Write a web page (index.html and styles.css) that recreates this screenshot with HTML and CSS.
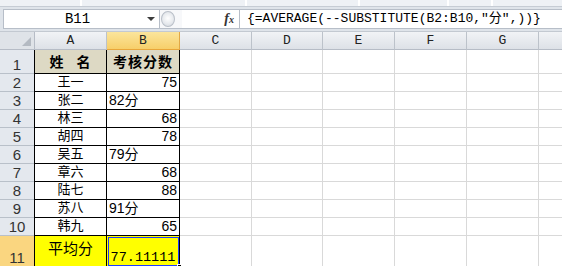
FILE: index.html
```html
<!DOCTYPE html>
<html lang="zh-CN">
<head>
    <meta charset="UTF-8">
    <title>平均分</title>
    <link rel="stylesheet" href="styles.css">
</head>
<body>
    <div class="ribbon">
        <span class="rb" style="width:82px"></span>
        <span class="rb" style="width:165px"></span>
        <span class="rb" style="width:113px"></span>
        <span class="rb" style="width:89px"></span>
        <span class="rb" style="width:44px"></span>
    </div>

    <div class="formula-bar">
        <div class="name-box">
            <span class="name">B11</span>
            <span class="arrow"></span>
        </div>
        <div class="grip"><span class="knob"></span></div>
        <div class="fx-area">
            <span class="fx"><i>f</i><i class="x">x</i></span>
        </div>
        <div class="formula">{=AVERAGE(--SUBSTITUTE(B2:B10,"分",))}</div>
    </div>

    <div class="sheet">
        <div class="corner"><span class="tri"></span></div>
        <div class="col-head">A</div>
        <div class="col-head active">B</div>
        <div class="col-head">C</div>
        <div class="col-head">D</div>
        <div class="col-head">E</div>
        <div class="col-head">F</div>
        <div class="col-head">G</div>
        <div class="col-head last"></div>

        <div class="row-head">1</div>
        <div class="cell t a title"><span class="spread">姓</span><span>名</span></div>
        <div class="cell t title">考核分数</div>
        <div class="cell"></div><div class="cell"></div><div class="cell"></div><div class="cell"></div><div class="cell"></div><div class="cell last"></div>

        <div class="row-head">2</div>
        <div class="cell t a name-cell">王一</div>
        <div class="cell t num">75</div>
        <div class="cell"></div><div class="cell"></div><div class="cell"></div><div class="cell"></div><div class="cell"></div><div class="cell last"></div>

        <div class="row-head">3</div>
        <div class="cell t a name-cell">张二</div>
        <div class="cell t txt">82分</div>
        <div class="cell"></div><div class="cell"></div><div class="cell"></div><div class="cell"></div><div class="cell"></div><div class="cell last"></div>

        <div class="row-head">4</div>
        <div class="cell t a name-cell">林三</div>
        <div class="cell t num">68</div>
        <div class="cell"></div><div class="cell"></div><div class="cell"></div><div class="cell"></div><div class="cell"></div><div class="cell last"></div>

        <div class="row-head">5</div>
        <div class="cell t a name-cell">胡四</div>
        <div class="cell t num">78</div>
        <div class="cell"></div><div class="cell"></div><div class="cell"></div><div class="cell"></div><div class="cell"></div><div class="cell last"></div>

        <div class="row-head">6</div>
        <div class="cell t a name-cell">吴五</div>
        <div class="cell t txt">79分</div>
        <div class="cell"></div><div class="cell"></div><div class="cell"></div><div class="cell"></div><div class="cell"></div><div class="cell last"></div>

        <div class="row-head">7</div>
        <div class="cell t a name-cell">章六</div>
        <div class="cell t num">68</div>
        <div class="cell"></div><div class="cell"></div><div class="cell"></div><div class="cell"></div><div class="cell"></div><div class="cell last"></div>

        <div class="row-head">8</div>
        <div class="cell t a name-cell">陆七</div>
        <div class="cell t num">88</div>
        <div class="cell"></div><div class="cell"></div><div class="cell"></div><div class="cell"></div><div class="cell"></div><div class="cell last"></div>

        <div class="row-head">9</div>
        <div class="cell t a name-cell">苏八</div>
        <div class="cell t txt">91分</div>
        <div class="cell"></div><div class="cell"></div><div class="cell"></div><div class="cell"></div><div class="cell"></div><div class="cell last"></div>

        <div class="row-head">10</div>
        <div class="cell t a name-cell">韩九</div>
        <div class="cell t num">65</div>
        <div class="cell"></div><div class="cell"></div><div class="cell"></div><div class="cell"></div><div class="cell"></div><div class="cell last"></div>

        <div class="row-head active">11</div>
        <div class="cell t a yellow avg-label">平均分</div>
        <div class="cell t yellow selected avg">77.11111<span class="handle"></span></div>
        <div class="cell"></div><div class="cell"></div><div class="cell"></div><div class="cell"></div><div class="cell"></div><div class="cell last"></div>
    </div>
</body>
</html>
```

FILE: styles.css
```css
body {
    margin: 0;
    width: 562px;
    height: 266px;
    overflow: hidden;
    background: #dfe4ea;
    font-family: 'Liberation Sans', 'Noto Sans CJK SC', sans-serif;
    color: #000;
}

/* ribbon remains at the very top */
.ribbon {
    display: flex;
    height: 6px;
    background: #eef1f5;
    border-bottom: 1px solid #c6ccd4;
}

.rb {
    height: 100%;
    border-right: 2px solid #fff;
    box-sizing: border-box;
}

/* formula bar */
.formula-bar {
    display: flex;
    height: 22px;
    padding: 2px 0 0 3px;
    border-bottom: 1px solid #c3c9d1;
}

.name-box {
    width: 157px;
    height: 20px;
    background: #fff;
    border: 1px solid #b7bec8;
    box-sizing: border-box;
    display: flex;
    align-items: center;
}

.name {
    flex: 1;
    text-align: center;
    font-family: 'Liberation Mono', 'Noto Sans CJK SC', monospace;
    font-size: 14px;
    padding-left: 4px;
}

.arrow {
    width: 0;
    height: 0;
    margin-right: 4px;
    border-left: 4px solid transparent;
    border-right: 4px solid transparent;
    border-top: 4px solid #3c3c3c;
}

.grip {
    width: 22px;
    height: 20px;
    display: flex;
    align-items: center;
    background: #f7f8fa;
    border-top: 1px solid #b7bec8;
    border-bottom: 1px solid #b7bec8;
    box-sizing: border-box;
}

.knob {
    width: 14px;
    height: 16px;
    margin-left: 1px;
    border-radius: 50%;
    border: 1px solid #b9bfc8;
    background: radial-gradient(circle at 50% 45%, #ffffff 0, #e7eaee 55%, #cfd4da 100%);
    box-sizing: border-box;
}

.fx-area {
    width: 58px;
    height: 20px;
    background: #fff;
    border-top: 1px solid #b7bec8;
    border-bottom: 1px solid #b7bec8;
    border-right: 1px solid #b7bec8;
    box-sizing: border-box;
    display: flex;
    align-items: center;
    justify-content: flex-end;
    padding-right: 5px;
}

.fx {
    font-family: 'Liberation Serif', serif;
    font-size: 14px;
    color: #333;
    font-weight: bold;
}

.fx .x {
    font-size: 10px;
}

.formula {
    flex: 1;
    height: 20px;
    background: #fff;
    border-top: 1px solid #b7bec8;
    border-bottom: 1px solid #b7bec8;
    box-sizing: border-box;
    padding-left: 7px;
    font-family: 'Liberation Mono', 'Noto Sans CJK SC', monospace;
    font-size: 13px;
    line-height: 18px;
    white-space: nowrap;
    overflow: hidden;
}

/* sheet grid */
.sheet {
    display: grid;
    grid-template-columns: 35px 72px 73px 72px 71px 72px 72px 72px 1fr;
    grid-template-rows: 18px 24px repeat(9, 18px) 31px;
    background: #fff;
}

.corner {
    background: #dfe3e8;
    border-right: 1px solid #b6bcc6;
    border-bottom: 1px solid #b6bcc6;
    position: relative;
}

.tri {
    position: absolute;
    right: 3px;
    bottom: 3px;
    width: 0;
    height: 0;
    border-left: 9px solid transparent;
    border-bottom: 9px solid #b4bac2;
}

.col-head {
    background: linear-gradient(#f1f3f6, #dde1e7);
    border-right: 1px solid #bcc2ca;
    border-bottom: 1px solid #b6bcc6;
    font-family: 'Liberation Mono', monospace;
    font-size: 13px;
    color: #222;
    text-align: center;
    line-height: 18px;
}

.col-head.active {
    background: linear-gradient(#fbe59c, #f7cf6a);
    border-bottom: 1px solid #e8a63a;
    border-right: 1px solid #e2a845;
}

.col-head.last {
    border-right: none;
}

.row-head {
    background: #e4e8ee;
    border-bottom: 1px solid #b9c0c9;
    border-right: 1px solid #b9c0c9;
    font-size: 15px;
    color: #333;
    display: flex;
    align-items: flex-end;
    justify-content: center;
    line-height: 17px;
}

.row-head.active {
    background: #fad680;
    border-right: 1px solid #e2a845;
}

.cell {
    border-right: 1px solid #d9d9d9;
    border-bottom: 1px solid #d9d9d9;
    font-size: 13px;
    display: flex;
    align-items: flex-end;
    padding: 0 2px 1px 2px;
    line-height: 16px;
    white-space: nowrap;
    position: relative;
}

.cell.last {
    border-right: none;
}

/* the bordered table A1:B11 */
.cell.t {
    border-right: 1px solid #000;
    border-bottom: 1px solid #000;
}

.cell.a {
    margin-left: -1px;
    border-left: 1px solid #000;
}

.title {
    background: #ddd9c4;
    justify-content: center;
    font-weight: bold;
    font-size: 14px;
    letter-spacing: 1px;
    padding-bottom: 3px;
}

.spread {
    margin-right: 12px;
}

.name-cell {
    justify-content: center;
}

.num {
    justify-content: flex-end;
    font-size: 14px;
}

.txt {
    font-size: 14px;
}

.yellow {
    background: #ffff00;
}

.avg-label {
    justify-content: center;
    align-items: center;
    font-size: 15px;
    padding-bottom: 4px;
}

.avg {
    font-family: 'Liberation Mono', monospace;
    font-size: 13.5px;
    justify-content: center;
    padding-bottom: 0;
}

.selected {
    outline: 1px solid #1e3cff;
    outline-offset: -2px;
}

.handle {
    position: absolute;
    right: -3px;
    bottom: -3px;
    width: 5px;
    height: 5px;
    background: #000;
    border: 1px solid #fff;
    box-sizing: border-box;
}
```
